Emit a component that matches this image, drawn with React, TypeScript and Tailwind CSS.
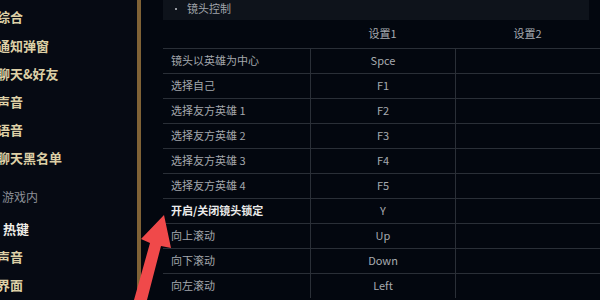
import React from 'react';

const font = { fontFamily: '"Noto Sans CJK SC", "Noto Sans", sans-serif' };

const rows: { name: string; key: string; bold?: boolean }[] = [
  { name: '镜头以英雄为中心', key: 'Spce' },
  { name: '选择自己', key: 'F1' },
  { name: '选择友方英雄 1', key: 'F2' },
  { name: '选择友方英雄 2', key: 'F3' },
  { name: '选择友方英雄 3', key: 'F4' },
  { name: '选择友方英雄 4', key: 'F5' },
  { name: '开启/关闭镜头锁定', key: 'Y', bold: true },
  { name: '向上滚动', key: 'Up' },
  { name: '向下滚动', key: 'Down' },
  { name: '向左滚动', key: 'Left' },
];

const Item = ({ label, h }: { label: string; h: string }) => (
  <div className={`${h} flex items-center -ml-[3px] text-[13px] font-bold text-[#ddd0a6] whitespace-nowrap`}>{label}</div>
);

export default function App() {
  return (
    <div className="relative w-[600px] h-[300px] overflow-hidden flex bg-[#03070f]" style={font}>
      {/* sidebar */}
      <div className="w-[137px] shrink-0 bg-[#060a13] flex flex-col pt-[2px]">
        <Item label="综合" h="h-[30px]" />
        <Item label="通知弹窗" h="h-[28px]" />
        <Item label="聊天&好友" h="h-[28px]" />
        <Item label="声音" h="h-[28px]" />
        <Item label="语音" h="h-[28px]" />
        <Item label="聊天黑名单" h="h-[28px]" />
        <div className="h-[36px] mt-[7px] flex items-center pl-[2px] text-[12px] text-[#8c9097]">游戏内</div>
        <div className="h-[28px] flex items-center pl-[3px] text-[13px] font-bold text-[#f0efe8]">热键</div>
        <Item label="声音" h="h-[28px]" />
        <Item label="界面" h="h-[28px]" />
      </div>
      <div className="w-[4px] shrink-0 bg-[#7f6236]" />

      {/* content */}
      <div className="flex-1 pl-[22px]">
        <div className="w-[426px] h-[20px] pb-[3px] bg-[#0e131b] flex items-center text-[11px] text-[#a0a4aa]">
          <span className="ml-[12px] w-[2px] h-[2px] rounded-full bg-[#c3c7cc]" />
          <span className="ml-[10px]">镜头控制</span>
        </div>
        <div className="w-[460px] grid grid-cols-[147px_145px_168px] text-[11px]">
          <div className="h-[28px]" />
          <div className="h-[28px] pb-[1px] flex items-center justify-center text-[#a7abb1]">设置1</div>
          <div className="h-[28px] pb-[1px] flex items-center justify-center pr-[23px] text-[#a7abb1]">设置2</div>
          {rows.map((r) => (
            <React.Fragment key={r.name}>
              <div
                className={`h-[25px] pb-[1px] border-t border-[#2a2f37] flex items-center pl-[8px] whitespace-nowrap ${
                  r.bold ? 'font-bold text-[#ebebeb]' : 'text-[#a3a7ad]'
                }`}
              >
                {r.name}
              </div>
              <div className="h-[25px] pb-[1px] border-t border-l border-[#2a2f37] flex items-center justify-center text-[#a7abb1]">
                {r.key}
              </div>
              <div className="h-[25px] border-t border-l border-[#2a2f37]" />
            </React.Fragment>
          ))}
        </div>
      </div>

      {/* red annotation arrow */}
      <svg className="absolute left-0 top-0 pointer-events-none" width="600" height="300" viewBox="0 0 600 300">
        <polygon
          points="164,215 171,248 161,246 147,300 134,300 150,243 141,239"
          fill="#f0494a"
        />
      </svg>
    </div>
  );
}
